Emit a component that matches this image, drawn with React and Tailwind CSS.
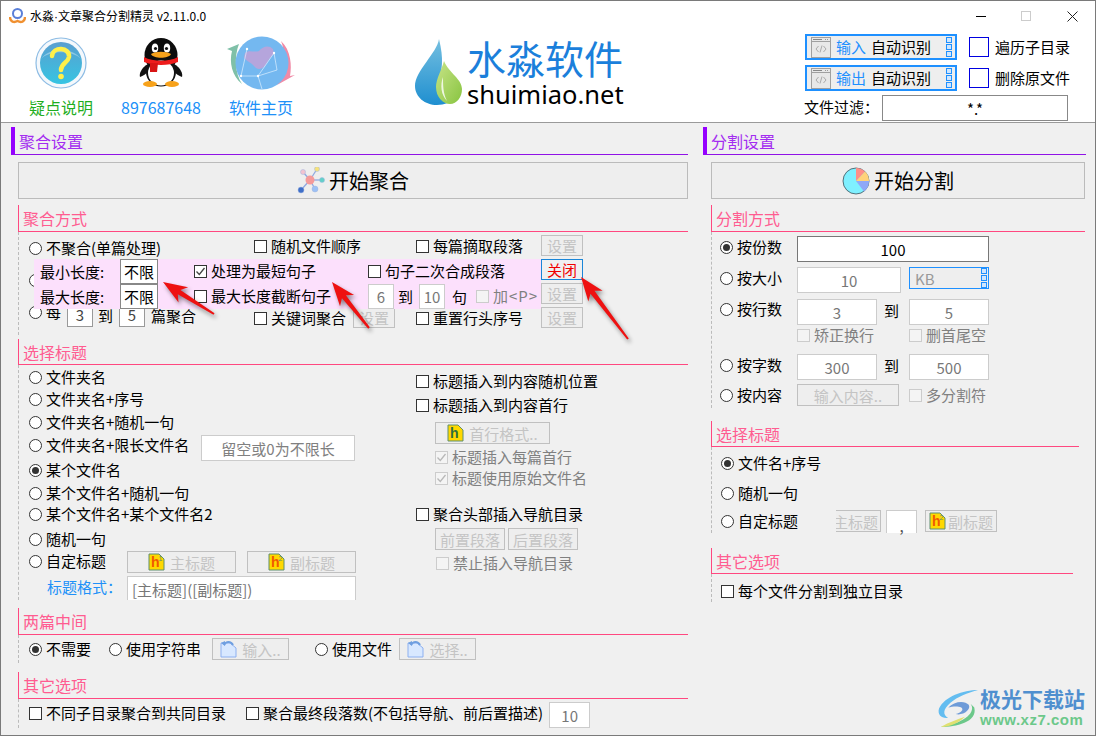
import React from 'react';

const FONT = "font-['Noto_Sans_CJK_SC','Noto_Sans',sans-serif]";

function Radio({ on, label, className = '' }) {
  return (
    <div className={`flex items-center h-4 shrink-0 whitespace-nowrap text-[15px] leading-none text-black ${className}`}>
      <span className="w-[13px] h-[13px] rounded-full border border-[#333] bg-white flex items-center justify-center shrink-0">
        {on && <span className="w-[7px] h-[7px] rounded-full bg-[#333]" />}
      </span>
      {label && <span className="ml-1 pb-[2px]">{label}</span>}
    </div>
  );
}

function Check({ on, off, label, className = '' }) {
  return (
    <div className={`flex items-center h-4 shrink-0 whitespace-nowrap text-[15px] leading-none ${off ? 'text-[#808080]' : 'text-black'} ${className}`}>
      <span className={`w-[13px] h-[13px] border flex items-center justify-center shrink-0 ${off ? 'border-[#ccc] bg-[#f4f4f4]' : 'border-[#333] bg-white'}`}>
        {on && (
          <svg width="11" height="11" viewBox="0 0 11 11" fill="none" stroke={off ? '#b8b8b8' : '#444'} strokeWidth="1.3">
            <path d="M1.5 5.5 L4.3 8.5 L9.5 2" />
          </svg>
        )}
      </span>
      {label && <span className="ml-1 pb-[2px]">{label}</span>}
    </div>
  );
}

function Field({ children, className = '' }) {
  return (
    <div className={`flex items-center justify-center shrink-0 bg-white border text-[15px] leading-none whitespace-nowrap overflow-hidden ${className}`}>
      {children}
    </div>
  );
}

function Btn({ children, className = '' }) {
  return (
    <div className={`flex items-center justify-center shrink-0 bg-[#eeeeee] border border-[#c0c0c0] text-[15px] leading-none text-[#c4c4c4] whitespace-nowrap overflow-hidden ${className}`}>
      {children}
    </div>
  );
}

function Section({ title }) {
  return (
    <div className="h-7 border-l-4 border-b border-l-[#9500ff] border-b-[#9012e6] pl-1 pt-px flex items-center text-[16px] leading-none text-[#a32cf0]">
      {title}
    </div>
  );
}

// className carries the height: h-[26px] or h-[27px]
function Sub({ title, className = '' }) {
  return (
    <div className={`border-l border-b border-[#ff4880] pl-1 flex items-center text-[16px] leading-none text-[#ff5c90] ${className}`}>
      {title}
    </div>
  );
}

function HIcon({ n, color = '#ffd800' }) {
  return (
    <svg width="17" height="18" viewBox="0 0 17 18" className="shrink-0">
      <path d="M1 1 H11 L16 6 V17 H1 Z" fill={color} stroke="#5f8f6f" />
      <text x="3" y="14" fontSize="14" fontWeight="700" fill={n ? '#f05a00' : '#2f6f3f'} fontFamily="'Liberation Sans',sans-serif">h</text>
      {n && <text x="10.5" y="8" fontSize="7" fill="#5f8f6f" fontFamily="'Liberation Sans',sans-serif">{n}</text>}
    </svg>
  );
}

function DocIcon() {
  return (
    <svg width="17" height="18" viewBox="0 0 17 18" fill="none" className="shrink-0">
      <path d="M1 3 H10 L16 8 V17 H1 Z" fill="#d8e8ff" stroke="#8db0f0" />
      <path d="M4 5 C6 1 11 1 13 5" stroke="#6f9fe0" strokeWidth="2" />
      <path d="M1 3 L5 1 V6 Z" fill="#6f9fe0" />
    </svg>
  );
}

function CodeIcon() {
  return (
    <svg width="20" height="21" viewBox="0 0 20 21" fill="none" className="shrink-0">
      <rect x="0.5" y="0.5" width="19" height="20" fill="#e8e8e8" stroke="#a0a0a0" />
      <path d="M1 4.5 H19" stroke="#a0a0a0" />
      <path d="M2 2.5 H11" stroke="#888" />
      <path d="M14 2.5 H18" stroke="#999" strokeDasharray="1 1" />
      <path d="M7.5 9 L5 12 L7.5 15 M12.5 9 L15 12 L12.5 15 M11 8.5 L9 15.5" stroke="#aaa" />
    </svg>
  );
}

function Dots({ className = '' }) {
  return (
    <div className={`flex flex-col gap-px ${className}`}>
      <span className="w-[6px] h-[6px] border border-[#1e90ff] bg-[#cfe6ff]" />
      <span className="w-[6px] h-[6px] border border-[#1e90ff] bg-[#cfe6ff]" />
      <span className="w-[6px] h-[6px] border border-[#1e90ff] bg-[#cfe6ff]" />
    </div>
  );
}

function HelpIcon() {
  return (
    <svg width="52" height="52" viewBox="0 0 52 52" fill="none">
      <defs>
        <linearGradient id="helpFill" x1="0" y1="0" x2="0" y2="1">
          <stop offset="0" stopColor="#5a9fd0" />
          <stop offset="1" stopColor="#36c4e2" />
        </linearGradient>
      </defs>
      <circle cx="26" cy="26" r="25" fill="#f4f8fc" stroke="#8dbce4" strokeWidth="1.2" />
      <circle cx="26" cy="26" r="21" fill="url(#helpFill)" />
      <path d="M6 22 C14 13 38 13 46 22 C38 10 14 10 6 22" fill="#ffffff" opacity="0.35" />
      <path d="M17 19 C18 9 35 10 34 20 C33 26 26 26 26 33" stroke="#fff04a" strokeWidth="4.5" strokeLinecap="round" />
      <circle cx="26" cy="39.5" r="2.8" fill="#fff04a" />
    </svg>
  );
}

function QQIcon() {
  return (
    <svg width="44" height="50" viewBox="0 0 44 50">
      <path d="M9 26 C2 30 0 36 1 39 C4 38 7 36 10 33 Z" fill="#111" />
      <path d="M35 26 C42 30 44 36 43 39 C40 38 37 36 34 33 Z" fill="#111" />
      <ellipse cx="22" cy="17" rx="16.5" ry="17" fill="#0c0c0c" />
      <ellipse cx="22" cy="34" rx="15" ry="14.5" fill="#111" />
      <ellipse cx="22" cy="35" rx="13" ry="12.5" fill="#fff" />
      <ellipse cx="16" cy="10" rx="3.2" ry="4.5" fill="#fff" />
      <ellipse cx="28" cy="10" rx="3.2" ry="4.5" fill="#fff" />
      <circle cx="16.5" cy="10.5" r="1.6" fill="#111" />
      <circle cx="27.5" cy="10.5" r="1.6" fill="#111" />
      <path d="M12 16 C17 13 27 13 32 16 C30 21 14 21 12 16 Z" fill="#f7a21b" />
      <path d="M5 19 C14 24 30 24 39 19 L39 24 C30 28 14 28 5 24 Z" fill="#ee1c1c" />
      <path d="M11 25 H19 L18 34 H11 Z" fill="#d81414" />
      <ellipse cx="11" cy="46" rx="7" ry="3" fill="#f7a21b" />
      <ellipse cx="33" cy="46" rx="7" ry="3" fill="#f7a21b" />
    </svg>
  );
}

function GlobeIcon() {
  return (
    <svg width="68" height="54" viewBox="0 0 68 54" fill="none">
      <path d="M0 13 L12 8 C7 20 8 38 15 48 C5 40 2 26 5 15 Z" fill="#7fc0a8" />
      <path d="M54 5 C64 14 65 30 63 40 L68 39 L50 49 C57 40 60 20 54 5 Z" fill="#f08aa6" />
      <circle cx="35" cy="27" r="26.5" fill="#74b8f0" />
      <path d="M18 17 C22 13 27 17 32 15 C36 10 42 9 46 13 L47 18 C43 21 41 25 38 30 C34 34 30 34 27 30 C24 26 18 25 17 21 Z" fill="#b5a5dc" />
      <path d="M14 40 L31 40 L47 17 M14 40 L20 13 M31 40 L50 34 L47 17 M31 40 L35 53" stroke="#dcefff" strokeWidth="0.7" />
      <circle cx="14" cy="40" r="1.2" fill="#fff" />
      <circle cx="31" cy="40" r="1.2" fill="#fff" />
      <circle cx="47" cy="17" r="1.2" fill="#fff" />
      <circle cx="20" cy="13" r="1.2" fill="#fff" />
    </svg>
  );
}

function DropLogo() {
  return (
    <svg width="47" height="66" viewBox="0 0 47 66" fill="none" className="shrink-0">
      <defs>
        <linearGradient id="dropBlue" x1="0" y1="0" x2="0" y2="1">
          <stop offset="0" stopColor="#74bfe0" />
          <stop offset="1" stopColor="#1f8fd0" />
        </linearGradient>
        <linearGradient id="dropGreen" x1="0" y1="0" x2="1" y2="1">
          <stop offset="0" stopColor="#c8e488" />
          <stop offset="1" stopColor="#88c440" />
        </linearGradient>
      </defs>
      <path d="M24 0 C22 14 0 32 0 47 C0 58 10 66 22 66 C30 66 34 63 34 63 C24 58 20 50 24 40 C27 32 29 20 24 0 Z" fill="url(#dropBlue)" />
      <path d="M29 22 C27 30 21 40 21 48 C21 58 28 65 35 65 C42 65 47 58 47 50 C47 40 34 34 29 22 Z" fill="url(#dropGreen)" />
      <path d="M28 38 C25 46 26 56 32 62 C28 54 28 46 28 38 Z" fill="#fff" opacity="0.8" />
    </svg>
  );
}

function NetworkIcon() {
  const nodes = [
    [6, 5, 2.5, '#f3c3d0'],
    [20, 2, 2.5, '#f7e27a'],
    [25, 13, 2.5, '#62d0c8'],
    [18, 22, 3, '#9cc0f5'],
    [4, 23, 3, '#3f6fc8'],
  ];
  return (
    <svg width="28" height="27" viewBox="0 0 28 27" fill="none" className="shrink-0">
      {nodes.map(([x, y], i) => (
        <path key={i} d={`M13 13 L${x} ${y}`} stroke="#8fa8e0" strokeWidth="1.3" />
      ))}
      {nodes.map(([x, y, r, c], i) => (
        <circle key={i} cx={x} cy={y} r={r} fill={c} stroke="#9fb4e0" strokeWidth="0.5" />
      ))}
      <circle cx="13" cy="13" r="4.5" fill="#f59a9a" />
    </svg>
  );
}

function PieIcon() {
  return (
    <svg width="28" height="28" viewBox="0 0 28 28" className="shrink-0">
      <circle cx="14" cy="14" r="13" fill="#7ff0ff" stroke="#3f4f58" strokeWidth="0.8" />
      <path d="M14 14 L27 14 A13 13 0 0 1 22 24.5 Z" fill="#8fa8f8" />
      <path d="M14 14 L23 4.5 A13 13 0 0 1 27 14 Z" fill="#ffd27a" />
      <path d="M14 14 L14 1 A13 13 0 0 1 23 4.5 Z" fill="#ff8f88" />
    </svg>
  );
}

function SwirlLogo() {
  return (
    <svg width="43" height="39" viewBox="0 0 46 42" fill="none" className="shrink-0">
      <path d="M44 1 C28 1 8 8 2 21 C0 28 5 32 12 31 C6 28 6 22 14 15 C22 8 34 4 44 1 Z" fill="#64bdf0" />
      <path d="M12 20 C18 13 30 12 34 17 C37 22 28 29 20 27 C26 26 29 22 26 20 C22 18 16 19 12 20 Z" fill="#6e9bd8" />
      <path d="M36 16 C42 24 32 36 4 41 C20 41 44 36 40 20 Z" fill="#6cc88a" />
      <path d="M4 41 C12 36 22 33 30 30 C24 36 14 41 4 41 Z" fill="#e0e070" />
    </svg>
  );
}

// red arrows lying over the form
function Arrows() {
  const list = [
    [[213, 313], [162, 281]],
    [[368, 327], [331, 281]],
    [[627, 338], [580, 276]],
  ];
  const poly = ([t, p]) => {
    const dx = p[0] - t[0];
    const dy = p[1] - t[1];
    const len = Math.hypot(dx, dy);
    const ux = dx / len;
    const uy = dy / len;
    const at = (back, side) => `${p[0] - ux * back - uy * side},${p[1] - uy * back + ux * side}`;
    return [
      at(0, 0), at(24, 9), at(19, 2.5), at(len, 1), at(len, -1), at(19, -2.5), at(24, -9),
    ].join(' ');
  };
  return (
    <svg width="1096" height="736" className="absolute left-0 top-0 z-20 pointer-events-none drop-shadow-[2px_3px_2px_rgba(0,0,0,0.45)]">
      {list.map((a, i) => (
        <polygon key={i} points={poly(a)} fill="#ee1111" />
      ))}
    </svg>
  );
}

function TitleBar() {
  return (
    <div className="h-[30px] flex items-center shrink-0">
      <svg width="17" height="18" viewBox="0 0 17 18" fill="none" className="ml-[8px]">
        <circle cx="8.5" cy="6.5" r="4.5" stroke="#5a7fd8" strokeWidth="2" />
        <path d="M1 10 C1 15 5 16 8.5 14 C12 16 16 15 16 10" stroke="#f09030" strokeWidth="2.4" />
      </svg>
      <span className="ml-[4px] text-[12px] leading-none text-black whitespace-nowrap">
        水淼<span className="font-['Liberation_Sans',sans-serif]">·</span>文章聚合分割精灵 v2.11.0.0
      </span>
      <div className="ml-auto flex items-center">
        <span className="w-[10px] h-px bg-black" />
        <span className="ml-[35px] w-[10px] h-[10px] border border-[#ccc]" />
        <svg width="11" height="11" viewBox="0 0 11 11" className="ml-[36px] mr-[17px]" stroke="#222" fill="none">
          <path d="M0.5 0.5 L10.5 10.5 M10.5 0.5 L0.5 10.5" />
        </svg>
      </div>
    </div>
  );
}

function IOButton({ kind }) {
  return (
    <div className="w-[152px] h-[26px] border-2 border-[#1e90ff] bg-[#eeeeee] flex items-center pl-[4px] pr-[3px] text-[15px] leading-none whitespace-nowrap">
      <CodeIcon />
      <span className="ml-[5px] pb-[2px] text-[#1e90ff]">{kind}</span>
      <span className="ml-[5px] pb-[2px] text-black">自动识别</span>
      <Dots className="ml-auto" />
    </div>
  );
}

function BlueBox({ label }) {
  return (
    <div className="ml-[12px] flex items-center text-[15px] leading-none text-black whitespace-nowrap">
      <span className="w-5 h-5 border border-[#0000e0] bg-white" />
      <span className="ml-[6px] pb-[2px]">{label}</span>
    </div>
  );
}

function Header() {
  return (
    <div className="h-[122px] bg-white border-b border-[#9a9a9a] flex flex-col shrink-0">
      <TitleBar />
      <div className="flex">
        <div className="ml-[10px] w-[100px] flex flex-col items-center pt-[7px]">
          <div className="h-[50px] flex items-center"><HelpIcon /></div>
          <div className="mt-[7px] text-[16px] leading-6 text-[#1fae1f]">疑点说明</div>
        </div>
        <div className="w-[100px] flex flex-col items-center pt-[7px]">
          <div className="h-[50px] flex items-center"><QQIcon /></div>
          <div className="mt-[7px] text-[16px] leading-6 text-[#2090f8]">897687648</div>
        </div>
        <div className="w-[100px] flex flex-col items-center pt-[7px]">
          <div className="h-[50px] flex items-center"><GlobeIcon /></div>
          <div className="mt-[7px] text-[16px] leading-6 text-[#2090f8]">软件主页</div>
        </div>
        <div className="ml-[104px] mt-[8px] flex">
          <DropLogo />
          <div className="ml-[5px] w-[157px]">
            <div className="-mt-px text-[39px] leading-[39px] text-[#1b7fdb] whitespace-nowrap">水淼软件</div>
            <div className="mt-[3px] text-[25.5px] leading-[28px] text-black whitespace-nowrap font-['Noto_Sans',sans-serif]">shuimiao.net</div>
          </div>
        </div>
        <div className="ml-[181px] mt-[3px] flex flex-col">
          <div className="flex items-center">
            <IOButton kind="输入" />
            <BlueBox label="遍历子目录" />
          </div>
          <div className="mt-[5px] flex items-center">
            <IOButton kind="输出" />
            <BlueBox label="删除原文件" />
          </div>
          <div className="mt-[4px] flex items-center text-[15px] leading-none text-black -ml-px">
            <span className="w-[78px] pb-[3px] whitespace-nowrap">文件过滤：</span>
            <Field className="w-[186px] h-[26px] border-[#888]">*.*</Field>
          </div>
        </div>
      </div>
    </div>
  );
}

function MergeMode() {
  return (
    <div className="relative h-[103px] mb-[4px] border-l border-dashed border-[#bbb] pl-[10px]">
      <div className="flex items-start h-[27px]">
        <div className="w-[225px]"><Radio label="不聚合(单篇处理)" className="mt-2" /></div>
        <div className="w-[162px]"><Check label="随机文件顺序" className="mt-[6px]" /></div>
        <div className="w-[125px]"><Check label="每篇摘取段落" className="mt-[6px]" /></div>
        <Btn className="w-[42px] h-[21px] mt-[3px]">设置</Btn>
      </div>
      <div className="flex items-start h-[48px]">
        <div className="w-[512px]"><Radio className="mt-[13px]" /></div>
        <div>
          <div className="w-[42px] h-[21px] flex items-center justify-center border border-[#1a86d8] bg-[#f0f0f0] text-[15px] leading-none text-[#f00000]">关闭</div>
          <Btn className="w-[42px] h-[21px] mt-[3px]">设置</Btn>
        </div>
      </div>
      <div className="flex items-start">
        <div className="w-[225px] flex items-start text-[15px] leading-none text-black whitespace-nowrap">
          <Radio label="每" className="-mt-[3px]" />
          <Field className="ml-[6px] -mt-[5px] w-[26px] h-[25px] border-[#999] text-[#444]">3</Field>
          <span className="ml-[5px] mt-[1px]">到</span>
          <Field className="ml-[6px] -mt-[5px] w-[26px] h-[25px] border-[#999] text-[#444]">5</Field>
          <span className="ml-[6px] mt-[1px]">篇聚合</span>
        </div>
        <div className="w-[99px]"><Check label="关键词聚合" className="mt-[3px]" /></div>
        <Btn className="w-[42px] h-[21px]">设置</Btn>
        <div className="ml-[21px] w-[125px]"><Check label="重置行头序号" className="mt-[3px]" /></div>
        <Btn className="w-[42px] h-[21px]">设置</Btn>
      </div>

      {/* 弹出的句子长度面板 */}
      <div className="absolute left-[15px] top-[27px] w-[507px] h-[50px] z-10 overflow-hidden bg-[#fce0fc] text-[15px] leading-none text-black whitespace-nowrap">
        <div className="flex items-center h-[25px]">
          <span className="w-[86px] pl-[6px]">最小长度:</span>
          <Field className="w-[38px] h-[25px] border-[#888]">不限</Field>
          <div className="ml-[36px] w-[174px]"><Check on label="处理为最短句子" /></div>
          <Check label="句子二次合成段落" />
        </div>
        <div className="flex items-center h-[25px]">
          <span className="w-[86px] pl-[6px]">最大长度:</span>
          <Field className="w-[38px] h-[25px] border-[#888]">不限</Field>
          <div className="ml-[36px] w-[174px]"><Check label="最大长度截断句子" /></div>
          <Field className="w-[26px] h-[25px] border-[#ccc] text-[#777]">6</Field>
          <span className="ml-[4px] w-[21px]">到</span>
          <Field className="w-[26px] h-[25px] border-[#ccc] text-[#777]">10</Field>
          <span className="ml-[7px]">句</span>
          <Check off label="加<P>" className="ml-[9px] tracking-[1px]" />
        </div>
      </div>
    </div>
  );
}

function TitleChoice() {
  return (
    <div className="h-[235px] border-l border-dashed border-[#bbb] pl-[10px] flex overflow-hidden">
      <div className="w-[387px] pt-[4px] flex flex-col">
        <Radio label="文件夹名" />
        <Radio label="文件夹名+序号" className="mt-[6px]" />
        <Radio label="文件夹名+随机一句" className="mt-[7px]" />
        <div className="mt-[7px] flex items-start h-4">
          <div className="w-[172px]"><Radio label="文件夹名+限长文件名" /></div>
          <Field className="-mt-[2px] w-[154px] h-[26px] border-[#ccc] text-[#808080]">留空或0为不限长</Field>
        </div>
        <Radio on label="某个文件名" className="mt-[9px]" />
        <Radio label="某个文件名+随机一句" className="mt-[7px]" />
        <Radio label="某个文件名+某个文件名2" className="mt-[5px]" />
        <Radio label="随机一句" className="mt-[9px]" />
        <div className="mt-[6px] flex items-start h-4">
          <div className="w-[98px]"><Radio label="自定标题" /></div>
          <Btn className="-mt-[2px] w-[109px] h-[22px] gap-[5px]"><HIcon n="1" />主标题</Btn>
          <Btn className="ml-[11px] -mt-[2px] w-[109px] h-[22px] gap-[5px]"><HIcon n="2" />副标题</Btn>
        </div>
        <div className="mt-[7px] flex items-start">
          <span className="ml-[18px] w-[80px] mt-[3px] text-[15px] leading-4 text-[#2090f8] whitespace-nowrap">标题格式：</span>
          <div className="w-[229px] h-[26px] bg-white border-x border-t border-[#ccc] pl-1 flex items-center text-[15px] leading-none text-[#777] whitespace-nowrap">[主标题]([副标题])</div>
        </div>
      </div>
      <div className="pt-[8px] flex flex-col items-start">
        <Check label="标题插入到内容随机位置" />
        <Check label="标题插入到内容首行" className="mt-2" />
        <Btn className="ml-[19px] mt-[9px] w-[115px] h-[22px] gap-[5px]"><HIcon />首行格式..</Btn>
        <Check on off label="标题插入每篇首行" className="ml-[19px] mt-[5px]" />
        <Check on off label="标题使用原始文件名" className="ml-[19px] mt-[5px]" />
        <Check label="聚合头部插入导航目录" className="mt-5" />
        <div className="ml-[19px] mt-[6px] flex gap-[3px]">
          <Btn className="w-[70px] h-[22px]">前置段落</Btn>
          <Btn className="w-[70px] h-[22px]">后置段落</Btn>
        </div>
        <Check off label="禁止插入导航目录" className="ml-5 mt-[5px]" />
      </div>
    </div>
  );
}

function LeftPanel() {
  return (
    <div className="ml-[10px] w-[677px] pt-1 shrink-0">
      <Section title="聚合设置" />
      <div className="ml-[7px] w-[670px]">
        <div className="mt-[7px] h-[37px] border border-[#bbb] bg-[#eeeeee] flex items-center justify-center gap-[4px] text-[20px] leading-none text-black">
          <NetworkIcon />开始聚合
        </div>
        <Sub title="聚合方式" className="mt-[6px] h-[27px]" />
        <MergeMode />
        <Sub title="选择标题" className="h-[26px]" />
        <TitleChoice />
        <Sub title="两篇中间" className="mt-2 h-[27px]" />
        <div className="h-[28px] border-l border-dashed border-[#bbb] pl-[10px] flex items-start">
          <Radio on label="不需要" className="mt-[6px]" />
          <Radio label="使用字符串" className="ml-[18px] mt-[6px]" />
          <Btn className="ml-[11px] mt-[3px] w-[77px] h-[22px] gap-[5px]"><DocIcon />输入..</Btn>
          <Radio label="使用文件" className="ml-[26px] mt-[6px]" />
          <Btn className="ml-[7px] mt-[3px] w-[77px] h-[22px] gap-[5px]"><DocIcon />选择..</Btn>
        </div>
        <Sub title="其它选项" className="mt-[9px] h-[27px]" />
        <div className="h-[29px] border-l border-dashed border-[#bbb] pl-[10px] flex items-start">
          <Check label="不同子目录聚合到共同目录" className="mt-[6px]" />
          <Check label="聚合最终段落数(不包括导航、前后置描述)" className="ml-[20px] mt-[6px]" />
          <Field className="ml-[6px] mt-[3px] w-[41px] h-[26px] border-[#ccc] text-[#777]">10</Field>
        </div>
      </div>
    </div>
  );
}

function RightPanel() {
  return (
    <div className="ml-[15px] w-[383px] pt-1 shrink-0">
      <Section title="分割设置" />
      <div className="ml-[8px]">
        <div className="mt-[7px] w-[374px] h-[37px] border border-[#bbb] bg-[#eeeeee] flex items-center justify-center gap-[4px] text-[20px] leading-none text-black">
          <PieIcon />开始分割
        </div>
        <Sub title="分割方式" className="mt-[6px] h-[27px] w-[374px]" />
        <div className="h-[176px] border-l border-dashed border-[#bbb] pl-2 pt-1">
          <div className="flex items-start">
            <div className="w-[77px]"><Radio on label="按份数" className="mt-[3px]" /></div>
            <Field className="w-[192px] h-[26px] border-[#777] text-black">100</Field>
          </div>
          <div className="mt-[5px] flex items-start">
            <div className="w-[77px]"><Radio label="按大小" className="mt-[3px]" /></div>
            <Field className="w-[104px] h-[26px] border-[#ccc] text-[#777]">10</Field>
            <div className="ml-[8px] w-[80px] h-[22px] border border-[#1e90ff] bg-[#eeeeee] flex items-center pl-[5px] pr-px text-[15px] leading-none text-[#999]">
              KB
              <Dots className="ml-auto" />
            </div>
          </div>
          <div className="mt-[6px] flex items-start">
            <div className="w-[77px]"><Radio label="按行数" className="mt-[2px]" /></div>
            <Field className="w-[80px] h-[26px] border-[#ccc] text-[#777]">3</Field>
            <span className="ml-[7px] w-[25px] mt-[4px] text-[15px] leading-none">到</span>
            <Field className="w-[80px] h-[26px] border-[#ccc] text-[#777]">5</Field>
          </div>
          <div className="mt-[2px] ml-[77px] flex">
            <div className="w-[112px]"><Check off label="矫正换行" /></div>
            <Check off label="删首尾空" />
          </div>
          <div className="mt-[11px] flex items-start">
            <div className="w-[77px]"><Radio label="按字数" className="mt-[3px]" /></div>
            <Field className="w-[80px] h-[26px] border-[#ccc] text-[#777]">300</Field>
            <span className="ml-[7px] w-[25px] mt-[4px] text-[15px] leading-none">到</span>
            <Field className="w-[80px] h-[26px] border-[#ccc] text-[#777]">500</Field>
          </div>
          <div className="mt-1 flex items-start">
            <div className="w-[77px]"><Radio label="按内容" className="mt-[3px]" /></div>
            <Btn className="w-[102px] h-[22px]">输入内容..</Btn>
            <Check off label="多分割符" className="ml-[10px] mt-[3px]" />
          </div>
        </div>
        <Sub title="选择标题" className="mt-[13px] h-[26px] w-[368px]" />
        <div className="h-[86px] mb-[15px] border-l border-dashed border-[#bbb] pl-[9px] pt-2">
          <Radio on label="文件名+序号" />
          <Radio label="随机一句" className="mt-[14px]" />
          <div className="mt-[9px] flex items-start">
            <div className="w-[115px]"><Radio label="自定标题" className="mt-[3px]" /></div>
            <div className="w-[45px] h-[22px] border-y border-r border-[#c0c0c0] bg-[#eeeeee] flex items-center justify-end pr-[2px] text-[15px] leading-none text-[#c4c4c4] whitespace-nowrap overflow-hidden">主标题</div>
            <div className="ml-[5px] w-[31px] h-[23px] bg-white border-x border-t border-[#ccc] flex items-end justify-center text-[15px] leading-none text-[#555]">,</div>
            <Btn className="ml-[8px] w-[72px] h-[22px] gap-[2px]"><HIcon n="2" />副标题</Btn>
          </div>
        </div>
        <Sub title="其它选项" className="h-[26px] w-[362px]" />
        <div className="h-[28px] border-l border-dashed border-[#bbb] pl-[9px] pt-[9px]">
          <Check label="每个文件分割到独立目录" />
        </div>
      </div>
    </div>
  );
}

export default function App() {
  return (
    <div className={`relative w-[1096px] h-[736px] overflow-hidden border border-[#7a7a7a] bg-[#f0f0f0] flex flex-col ${FONT}`}>
      <Header />
      <div className="flex">
        <LeftPanel />
        <RightPanel />
      </div>

      {/* 水印 */}
      <div className="absolute right-[10px] bottom-[5px] z-20 flex items-center">
        <SwirlLogo />
        <div>
          <div className="text-[21px] leading-[24px] font-bold text-[#4f8fcf] whitespace-nowrap">极光下载站</div>
          <div className="text-[15px] leading-[20px] font-bold text-[#6cc88a] whitespace-nowrap font-['Liberation_Sans',sans-serif] tracking-[0.5px]">www.xz7.com</div>
        </div>
      </div>

      <Arrows />
    </div>
  );
}
